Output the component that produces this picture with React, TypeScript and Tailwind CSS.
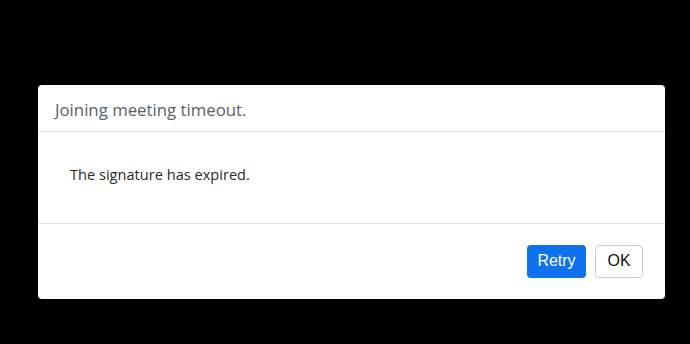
export default function App() {
  return (
    <div className="min-h-[344px] w-full bg-black pt-[85px] pl-[38px]">
      <div className="w-[627px] rounded-[4px] bg-white" style={{ fontFamily: '"Open Sans", sans-serif' }}>
        <div className="flex h-[47px] items-center border-b border-[#e5e5e5] px-[17px] pt-[5px]">
          <h2 className="text-[16.8px] leading-none text-[#595f66]">Joining meeting timeout.</h2>
        </div>
        <div className="flex h-[92px] items-center border-b border-[#e5e5e5] px-[32px] pb-[7px]">
          <p className="text-[14.6px] leading-none text-[#2b2b2b]">The signature has expired.</p>
        </div>
        <div className="flex h-[75px] items-center justify-end gap-[9px] px-[22px] pb-[1px]" style={{ fontFamily: '"Liberation Sans", Arial, sans-serif' }}>
          <button className="h-[33px] w-[59px] rounded-[4px] bg-[#0e72ed] text-[16px] text-white">Retry</button>
          <button className="h-[33px] w-[48px] rounded-[4px] border border-[#cccccc] bg-white text-[16px] text-[#111]">OK</button>
        </div>
      </div>
    </div>
  );
}
